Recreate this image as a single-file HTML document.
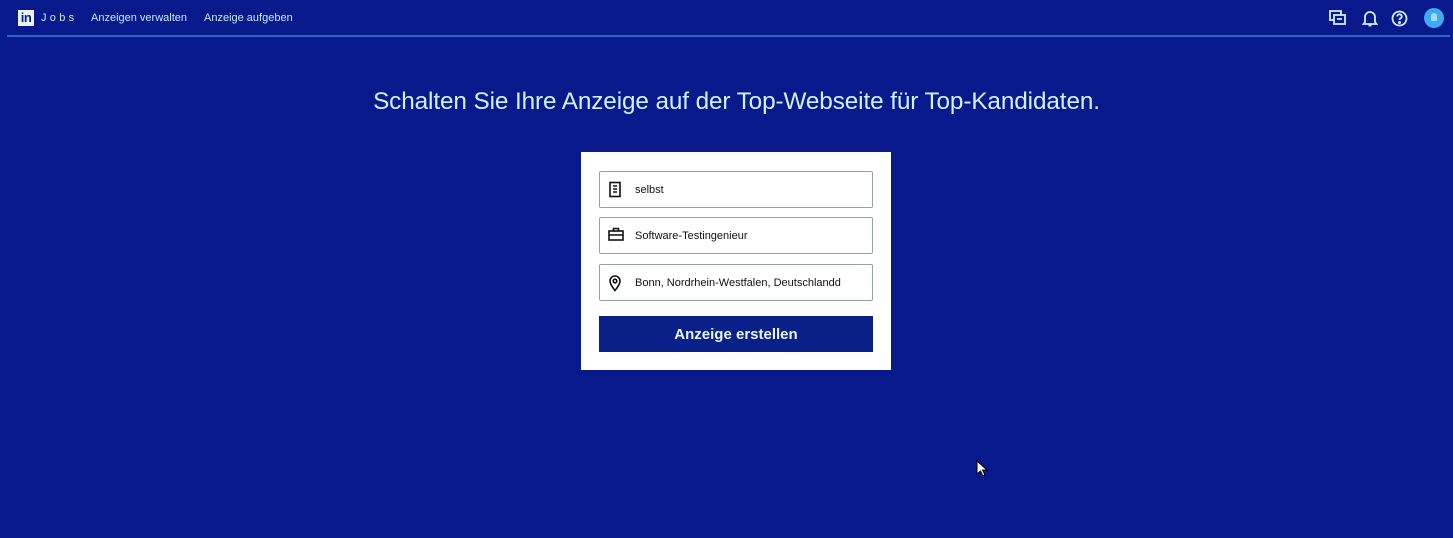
<!DOCTYPE html>
<html><head><meta charset="utf-8"><style>
*{margin:0;padding:0;box-sizing:border-box}
body{width:1453px;height:538px;overflow:hidden;background:#08198c;font-family:"Liberation Sans",sans-serif;position:relative}
.top{position:absolute;left:0;top:0;width:1453px;height:36px}
.line{position:absolute;left:7px;right:3px;top:35px;height:2px;background:#2a6bc0}
.logo{position:absolute;left:18px;top:10px;width:16px;height:16px;background:#e8f4ff;color:#0a1c8e;font-weight:bold;font-size:13px;line-height:16px;text-align:center;letter-spacing:-0.5px}
.jobs{position:absolute;left:41px;top:12px;color:#bfeaff;font-size:11px;letter-spacing:3.3px}
.nav{position:absolute;top:12px;color:#bfeaff;font-size:11px}
h1{position:absolute;left:0;width:1473px;top:88px;text-align:center;color:#d0f1ff;font-weight:normal;font-size:24.3px;letter-spacing:-0.1px}
.card{position:absolute;left:581px;top:152px;width:310px;height:218px;background:#fff}
.f{position:absolute;left:18px;width:274px;height:37px;border:1.5px solid #8fa3a8;border-radius:2px}
.f span{position:absolute;left:35px;top:12px;font-size:11px;color:#111}
.f svg{position:absolute;left:8px;top:9px}
.btn{position:absolute;left:18px;top:164px;width:274px;height:36px;background:#0a1f88;color:#e4f6ff;font-weight:bold;font-size:15px;text-align:center;line-height:38px}
</style></head><body>
<div class="top">
<div class="logo">in</div><div class="jobs">Jobs</div>
<div class="nav" style="left:91px">Anzeigen verwalten</div>
<div class="nav" style="left:204px">Anzeige aufgeben</div>
<svg style="position:absolute;left:1329px;top:10px" width="18" height="17" viewBox="0 0 18 17" fill="none" stroke="#cfeeff" stroke-width="1.8"><rect x="1" y="1" width="11" height="9"/><rect x="5" y="5" width="11" height="9" fill="#08198c"/><path d="M8 9h5"/></svg>
<svg style="position:absolute;left:1362px;top:10px" width="16" height="17" viewBox="0 0 16 17" fill="none" stroke="#cfeeff" stroke-width="1.8"><path d="M3 12V7a5 5 0 0 1 10 0v5l1.5 2h-13z"/><path d="M6.5 15.5h3"/></svg>
<svg style="position:absolute;left:1391px;top:10px" width="17" height="17" viewBox="0 0 17 17" fill="none" stroke="#cfeeff" stroke-width="1.8"><circle cx="8.5" cy="8.5" r="7"/><path d="M6.3 6.5a2.2 2.2 0 1 1 3 2c-.7.3-.8.8-.8 1.5"/><circle cx="8.5" cy="12.5" r=".6" fill="#cfeeff"/></svg>
<div style="position:absolute;left:1424px;top:8px;width:20px;height:20px;border-radius:50%;background:#3fa9f2"></div>
<div style="position:absolute;left:1431px;top:13px;width:6px;height:8px;border-radius:3px 3px 1px 1px;background:#a8dcff"></div>
</div>
<div class="line"></div>
<h1>Schalten Sie Ihre Anzeige auf der Top-Webseite für Top-Kandidaten.</h1>
<div class="card">
<div class="f" style="top:19px"><svg width="14" height="17" viewBox="0 0 14 17" fill="none" stroke="#111" stroke-width="1.6"><rect x="2" y="1.5" width="10" height="14"/><path d="M5 5h4M5 8h4M5 11h4"/></svg><span>selbst</span></div>
<div class="f" style="top:65px"><svg width="16" height="15" viewBox="0 0 16 15" fill="none" stroke="#111" stroke-width="1.6"><rect x="1" y="4" width="14" height="9"/><path d="M5.5 4V1.5h5V4M1 8h14"/></svg><span>Software-Testingenieur</span></div>
<div class="f" style="top:112px"><svg width="14" height="18" viewBox="0 0 14 18" fill="none" stroke="#111" stroke-width="1.6"><path d="M7 16.5S2 10.5 2 7a5 5 0 0 1 10 0c0 3.5-5 9.5-5 9.5z"/><circle cx="7" cy="7" r="1.8"/></svg><span>Bonn, Nordrhein-Westfalen, Deutschlandd</span></div>
<div class="btn">Anzeige erstellen</div>
</div>
<svg style="position:absolute;left:976px;top:460px" width="12" height="17" viewBox="0 0 12 17"><path d="M1 1v13l3.5-3 2.5 5 2-1-2.5-5H11z" fill="#fff" stroke="#000" stroke-width="1"/></svg>
</body></html>
